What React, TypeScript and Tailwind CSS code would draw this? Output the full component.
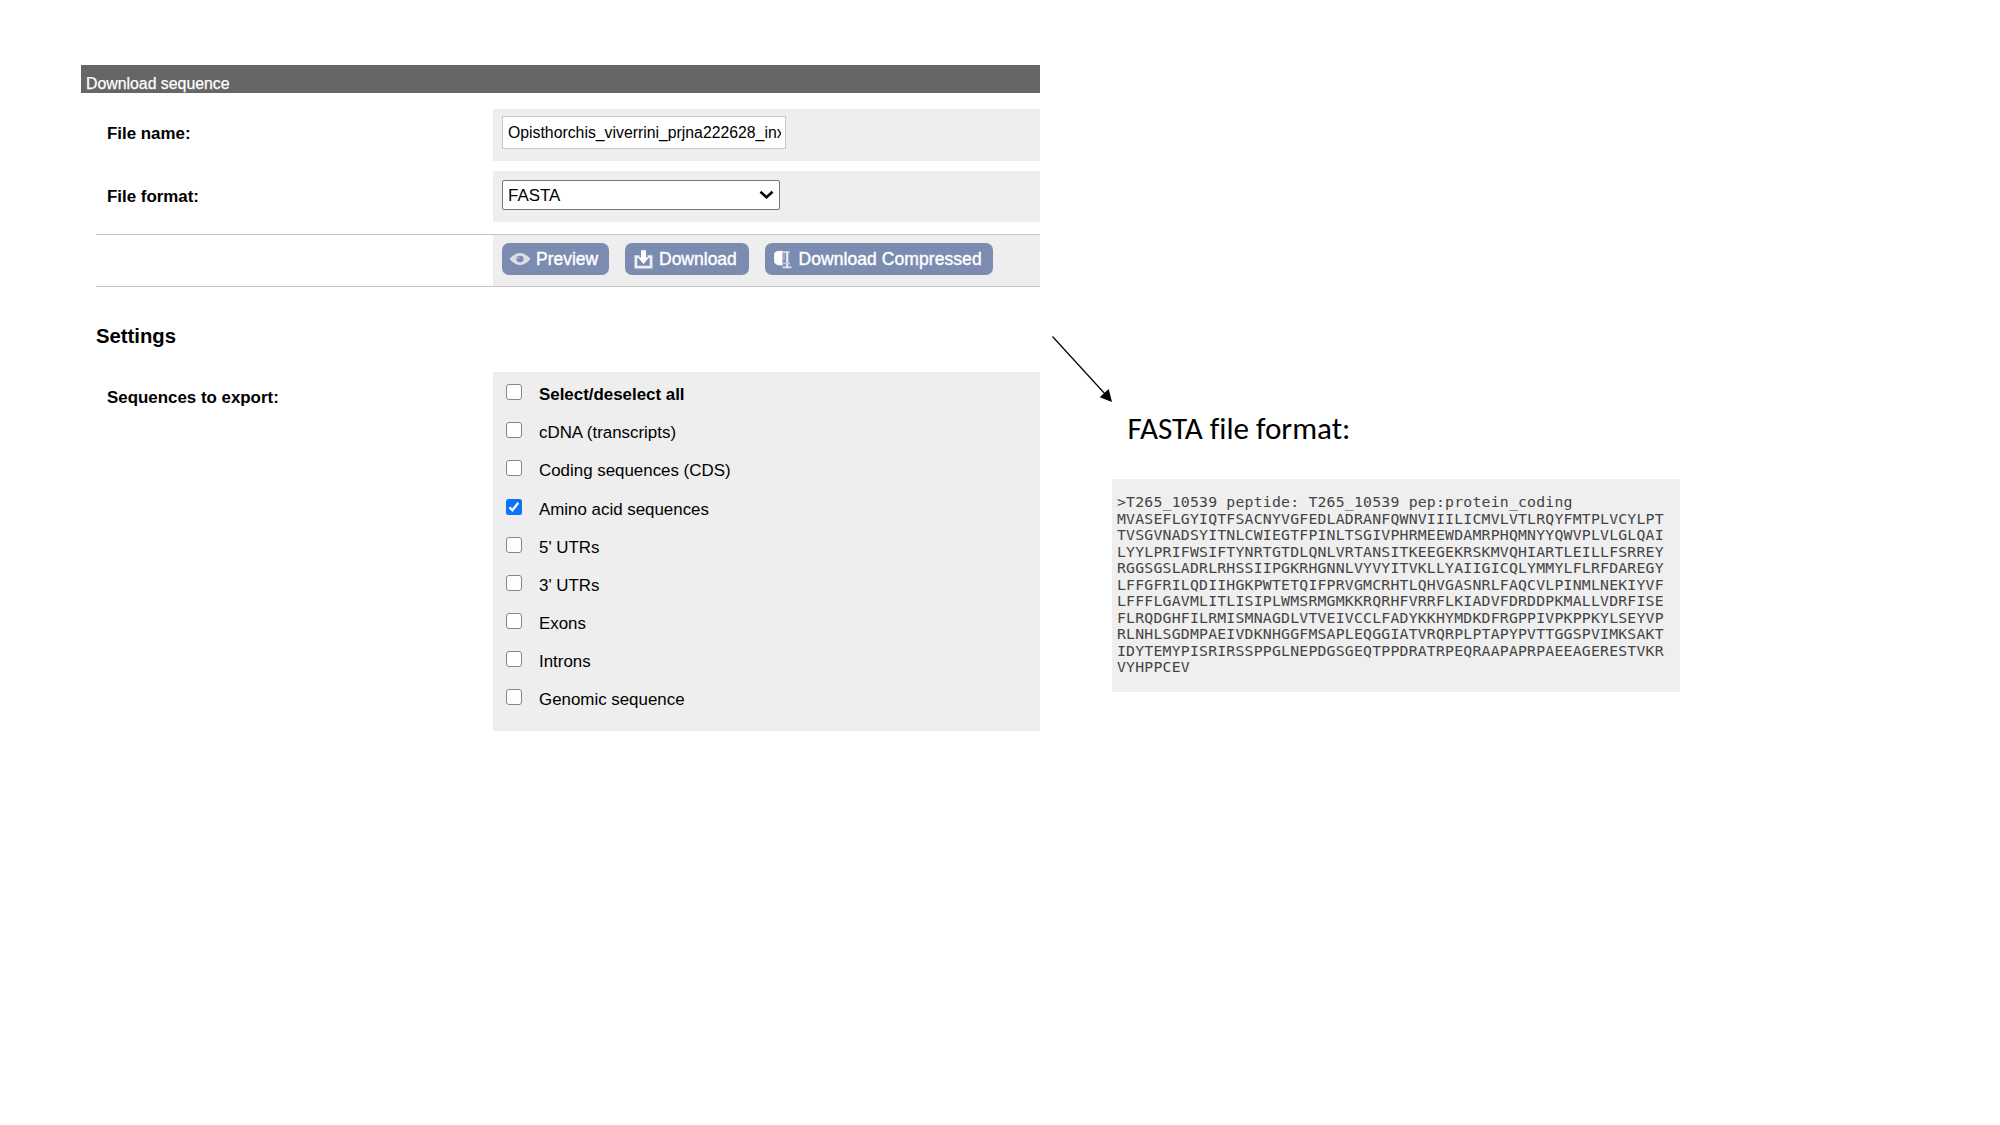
import React from "react";

const options = [
  { label: "Select/deselect all", bold: true },
  { label: "cDNA (transcripts)" },
  { label: "Coding sequences (CDS)" },
  { label: "Amino acid sequences", checked: true },
  { label: "5' UTRs" },
  { label: "3' UTRs" },
  { label: "Exons" },
  { label: "Introns" },
  { label: "Genomic sequence" },
];

const fasta = `>T265_10539 peptide: T265_10539 pep:protein_coding
MVASEFLGYIQTFSACNYVGFEDLADRANFQWNVIIILICMVLVTLRQYFMTPLVCYLPT
TVSGVNADSYITNLCWIEGTFPINLTSGIVPHRMEEWDAMRPHQMNYYQWVPLVLGLQAI
LYYLPRIFWSIFTYNRTGTDLQNLVRTANSITKEEGEKRSKMVQHIARTLEILLFSRREY
RGGSGSLADRLRHSSIIPGKRHGNNLVYVYITVKLLYAIIGICQLYMMYLFLRFDAREGY
LFFGFRILQDIIHGKPWTETQIFPRVGMCRHTLQHVGASNRLFAQCVLPINMLNEKIYVF
LFFFLGAVMLITLISIPLWMSRMGMKKRQRHFVRRFLKIADVFDRDDPKMALLVDRFISE
FLRQDGHFILRMISMNAGDLVTVEIVCCLFADYKKHYMDKDFRGPPIVPKPPKYLSEYVP
RLNHLSGDMPAEIVDKNHGGFMSAPLEQGGIATVRQRPLPTAPYPVTTGGSPVIMKSAKT
IDYTEMYPISRIRSSPPGLNEPDGSGEQTPPDRATRPEQRAAPAPRPAEEAGERESTVKR
VYHPPCEV`;

function EyeIcon() {
  return (
    <svg className="h-[14px] w-[22px] shrink-0" viewBox="0 0 22 14">
      <path
        fillRule="evenodd"
        fill="#dcdde0"
        d="M.5 7C4 3 7.500 1 11 1S18 3 21.500 7C18 11 14.500 13 11 13S4 11 .5 7ZM11 3.800A3.600 3.200 0 1 0 11 10.200A3.600 3.200 0 1 0 11 3.800Z"
      />
      <circle cx="9.600" cy="5.800" r="1.100" fill="#a9b2c8" />
    </svg>
  );
}

function DownloadIcon() {
  return (
    <svg className="h-[19px] w-[19px] shrink-0" viewBox="0 0 19 19">
      <path d="M5.500 6.700H1.900V17.100H17.100V6.700H13.500" fill="none" stroke="#eceef3" strokeWidth="2.800" />
      <path d="M7 .3h5v7.200h3L9.500 14 4 7.500h3z" fill="#fff" />
    </svg>
  );
}

function CompressIcon() {
  return (
    <svg className="h-[19px] w-[19px] shrink-0" viewBox="0 0 19 19">
      <path d="M1 3.500C2.500 1 6 .6 9.500 1V15.500C6 15.600 3 15 1.300 12.500Z" fill="#fff" />
      <path d="M9 2H16.500M9.500 17.300H18.500" fill="none" stroke="#dfe3ed" strokeWidth="1.700" />
      <path d="M14.200 2V17" fill="none" stroke="#e9ebf1" strokeWidth="2.300" />
      <path d="M11 3V10.500" fill="none" stroke="#b4bdd2" strokeWidth="1.300" />
      <path d="M10 13.500H17" stroke="#c3cadb" strokeWidth="1.600" />
    </svg>
  );
}

function Action({ icon, label, className }: { icon: React.ReactNode; label: string; className: string }) {
  return (
    <button
      className={
        "flex h-8 items-center rounded-[7px] bg-[#7c8bb0] text-[17.5px] leading-8 whitespace-nowrap text-white [-webkit-text-stroke:0.4px_white] " +
        className
      }
    >
      {icon}
      <span>{label}</span>
    </button>
  );
}

function Checkbox({ checked }: { checked?: boolean }) {
  return checked ? (
    <span className="size-4 shrink-0 rounded-[2.5px] bg-[#0a75fb]">
      <svg viewBox="0 0 16 16" className="size-4">
        <path d="M3.500 8.400L6.400 11.300L12.300 3.800" fill="none" stroke="#fff" strokeWidth="2.300" />
      </svg>
    </span>
  ) : (
    <span className="size-4 shrink-0 rounded-[3px] border border-[#858585] bg-white" />
  );
}

export default function App() {
  return (
    <main className="flex h-[1125px] w-[2000px] items-start overflow-hidden bg-white font-['Liberation_Sans',Arial,sans-serif] text-[16.9px] text-black">
      <section className="mt-[65px] ml-[81px] w-[959px] shrink-0">
        <header className="h-7 bg-[#666] pt-[9px] pl-[5px] text-[15.85px] leading-[19px] text-white [-webkit-text-stroke:0.25px_white]">
          Download sequence
        </header>

        <div className="mt-4 flex h-[51.500px] justify-between pl-[26px]">
          <label className="leading-[49px] font-bold">File name:</label>
          <div className="w-[547px] bg-[#eee] pt-[7px] pl-[9px]">
            <input
              className="block h-[33px] w-[284px] border border-[#c8c8c8] bg-white pr-1 pl-[5px] text-[15.8px] outline-none"
              defaultValue="Opisthorchis_viverrini_prjna222628_inx"
            />
          </div>
        </div>

        <div className="mt-[10.500px] flex h-[51px] justify-between pl-[26px]">
          <label className="leading-[51px] font-bold">File format:</label>
          <div className="w-[547px] bg-[#eee] pt-[9px] pl-[9px]">
            <div className="flex h-[30px] w-[278px] items-center justify-between rounded-[2px] border border-[#767676] bg-white pr-[5px] pl-[5px]">
              <span className="pt-[2px]">FASTA</span>
              <svg className="h-[10px] w-[15px]" viewBox="0 0 15 10">
                <path d="M1.500 1.800L7.500 7.300L13.500 1.800" fill="none" stroke="#000" strokeWidth="2.600" />
              </svg>
            </div>
          </div>
        </div>

        <div className="mt-3 ml-[15px] flex h-[53px] justify-end border-y-[1.500px] border-[#c4c4c4]">
          <div className="flex w-[547px] bg-[#eee] pt-2 pl-[9px]">
            <Action icon={<EyeIcon />} label="Preview" className="w-[107px] gap-[5px] pl-[7px]" />
            <Action icon={<DownloadIcon />} label="Download" className="ml-4 w-[124px] gap-[6.500px] pl-[8.500px]" />
            <Action
              icon={<CompressIcon />}
              label="Download Compressed"
              className="ml-4 w-[228px] gap-[6.500px] pl-[8px] tracking-[0.07px]"
            />
          </div>
        </div>

        <h2 className="mt-[35px] pl-[15px] text-[20.3px] leading-[28px] font-bold">Settings</h2>

        <div className="mt-[22px] flex h-[359px] justify-between pl-[26px]">
          <label className="pt-[14px] leading-6 font-bold">Sequences to export:</label>
          <div className="w-[547px] bg-[#eee] pt-3 pl-[13px]">
            {options.map((o) => (
              <div key={o.label} className="flex h-[38.200px] gap-[17px] last:-mt-px">
                <Checkbox checked={o.checked} />
                <span className={o.bold ? "leading-[21px] font-bold" : "leading-[22.500px]"}>{o.label}</span>
              </div>
            ))}
          </div>
        </div>
      </section>

      <svg className="mt-[334px] ml-[10px] h-[70px] w-[62px] shrink-0" viewBox="1050 334 62 70">
        <path d="M1052.500 336.500L1106 395" stroke="#000" strokeWidth="1.200" />
        <path d="M1112 402L1108.700 389L1099.700 397.300Z" fill="#000" />
      </svg>

      <section className="mt-[407px] w-[568px] shrink-0">
        <h1 className="pl-[15.500px] font-['Carlito','Lato',sans-serif] text-[31.1px] leading-[42px] whitespace-nowrap [font-variant-ligatures:none]">
          FASTA file format:
        </h1>
        <pre className="mt-[30px] h-[213px] bg-[#efefef] pt-[15px] pl-[5px] font-['DejaVu_Sans_Mono',monospace] text-[14.8px] leading-[16.500px] tracking-[0.205px] text-[#444]">
          {fasta}
        </pre>
      </section>
    </main>
  );
}
